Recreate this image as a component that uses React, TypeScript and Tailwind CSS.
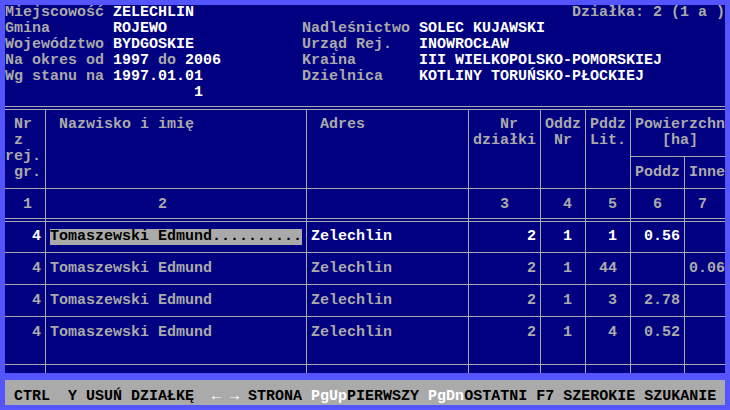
import type { ReactNode } from 'react';
import clsx from 'clsx';

// column widths measured line-to-line (9px text cells, lines sit 4px into a cell)
const COLS = ['w-[40px]', 'w-[261px]', 'w-[162px]', 'w-[72px]', 'w-[45px]', 'w-[45px]', 'w-[54px]', 'w-[41px]'];

const G = 'text-[#aaaaaa]';
const W = 'text-white';

function Cell({ i, children, className }: { i: number; children?: ReactNode; className?: string }) {
  return (
    <div className={clsx('shrink-0', COLS[i], i > 0 && 'border-l border-[#aaaaaa] pl-[4px]', className)}>
      {children}
    </div>
  );
}

function Band({ cells, className, pad }: { cells: ReactNode[]; className: string; pad?: string }) {
  return (
    <div className={clsx('flex border-[#aaaaaa]', className)}>
      {cells.map((c, i) => (
        <Cell key={i} i={i} className={pad}>
          {c}
        </Cell>
      ))}
    </div>
  );
}

const rows = [
  { nr: '   4', name: 'Tomaszewski Edmund', adr: 'Zelechlin', dz: '      2', od: '  1', pd: '  1', pow: ' 0.56', inne: '', sel: true },
  { nr: '   4', name: 'Tomaszewski Edmund', adr: 'Zelechlin', dz: '      2', od: '  1', pd: ' 44', pow: '', inne: '0.06' },
  { nr: '   4', name: 'Tomaszewski Edmund', adr: 'Zelechlin', dz: '      2', od: '  1', pd: '  3', pow: ' 2.78', inne: '' },
  { nr: '   4', name: 'Tomaszewski Edmund', adr: 'Zelechlin', dz: '      2', od: '  1', pd: '  4', pow: ' 0.52', inne: '' },
];

const bandCls = [
  'h-[31px] border-b',
  'h-[32px] border-b',
  'h-[32px] border-b',
  'h-[48px] border-b',
];

function Info({ label, value }: { label: string; value: ReactNode }) {
  return (
    <div>
      <span className={G}>{label}</span>
      <span className={W}>{value}</span>
    </div>
  );
}

export default function App() {
  return (
    <div className="w-[730px] h-[410px] bg-[#5555ff] p-[5px]">
      <div className="w-[720px] h-[400px] bg-[#000080] whitespace-pre font-['Liberation_Mono',monospace] font-bold text-[15px] leading-[16px] text-[#aaaaaa]">
        {/* header block, rows 0-5 */}
        <div className="flex justify-between">
          <Info label="Miejscowość " value="ZELECHLIN" />
          <span>Działka: 2 (1 a )</span>
        </div>
        <div className="grid grid-cols-[297px_1fr]">
          <Info label="Gmina       " value="ROJEWO" />
          <Info label="Nadleśnictwo " value="SOLEC KUJAWSKI" />
          <Info label="Województwo " value="BYDGOSKIE" />
          <Info label="Urząd Rej.   " value="INOWROCŁAW" />
          <div>
            <span>Na okres od </span>
            <span className={W}>1997</span>
            <span> do </span>
            <span className={W}>2006</span>
          </div>
          <Info label="Kraina       " value="III WIELKOPOLSKO-POMORSKIEJ" />
          <Info label="Wg stanu na " value="1997.01.01" />
          <Info label="Dzielnica    " value="KOTLINY TORUŃSKO-PŁOCKIEJ" />
        </div>
        <div className={W}>{'                     1'}</div>

        {/* table */}
        <div className="h-[5px]" />
        <div className="h-px bg-[#aaaaaa]" />
        <div className="h-[2px]" />

        <div className="flex h-[80px] border-y border-[#aaaaaa]">
          <Cell i={0} className="pt-[7px]">
            <div> Nr</div>
            <div> z</div>
            <div>rej.</div>
            <div> gr.</div>
          </Cell>
          <Cell i={1} className="pt-[7px]"> Nazwisko i imię</Cell>
          <Cell i={2} className="pt-[7px]"> Adres</Cell>
          <Cell i={3} className="pt-[7px]">
            <div>   Nr</div>
            <div>działki</div>
          </Cell>
          <Cell i={4} className="pt-[7px]">
            <div>Oddz</div>
            <div> Nr</div>
          </Cell>
          <Cell i={5} className="pt-[7px]">
            <div>Pddz</div>
            <div>Lit.</div>
          </Cell>
          <div className="w-[95px] shrink-0 border-l border-[#aaaaaa] flex flex-col">
            <div className="h-[47px] border-b border-[#aaaaaa] pt-[7px] pl-[4px]">
              <div>Powierzchn</div>
              <div>   [ha]</div>
            </div>
            <div className="flex flex-1">
              <div className="w-[53px] pl-[4px] pt-[8px]">Poddz</div>
              <div className="w-[41px] border-l border-[#aaaaaa] pl-[4px] pt-[8px]">Inne</div>
            </div>
          </div>
        </div>

        <Band
          className="h-[29px]"
          pad="pt-[8px]"
          cells={['  1', '            2', '', '   3', '  4', '  5', '  6', ' 7']}
        />
        <Band className="h-[4px] border-y" cells={['', '', '', '', '', '', '', '']} />

        {rows.map((r, k) => (
          <Band
            key={k}
            className={clsx(bandCls[k], r.sel ? W : G)}
            pad={k === 0 ? 'pt-[7px]' : 'pt-[8px]'}
            cells={[
              r.nr,
              r.sel ? (
                <div className="w-[252px] bg-[#aaaaaa] text-black">{r.name + '..........'}</div>
              ) : (
                r.name
              ),
              r.adr,
              r.dz,
              r.od,
              r.pd,
              r.pow,
              r.inne,
            ]}
          />
        ))}
        <Band className="h-[8px]" cells={['', '', '', '', '', '', '', '']} />

        {/* status bar */}
        <div className="h-[7px] bg-[#5555ff]" />
        <div className="h-[25px] bg-[#aaaaaa] text-black flex items-end">
          <div>
            <span> CTRL  Y USUŃ DZIAŁKĘ  </span>
            <span className="inline-block w-[9px] text-center text-white">←</span>
            <span> </span>
            <span className="inline-block w-[9px] text-center text-white">→</span>
            <span> STRONA </span>
            <span className="text-white">PgUp</span>
            <span>PIERWSZY </span>
            <span className="text-white">PgDn</span>
            <span>OSTATNI F7 SZEROKIE SZUKANIE</span>
          </div>
        </div>
      </div>
    </div>
  );
}
